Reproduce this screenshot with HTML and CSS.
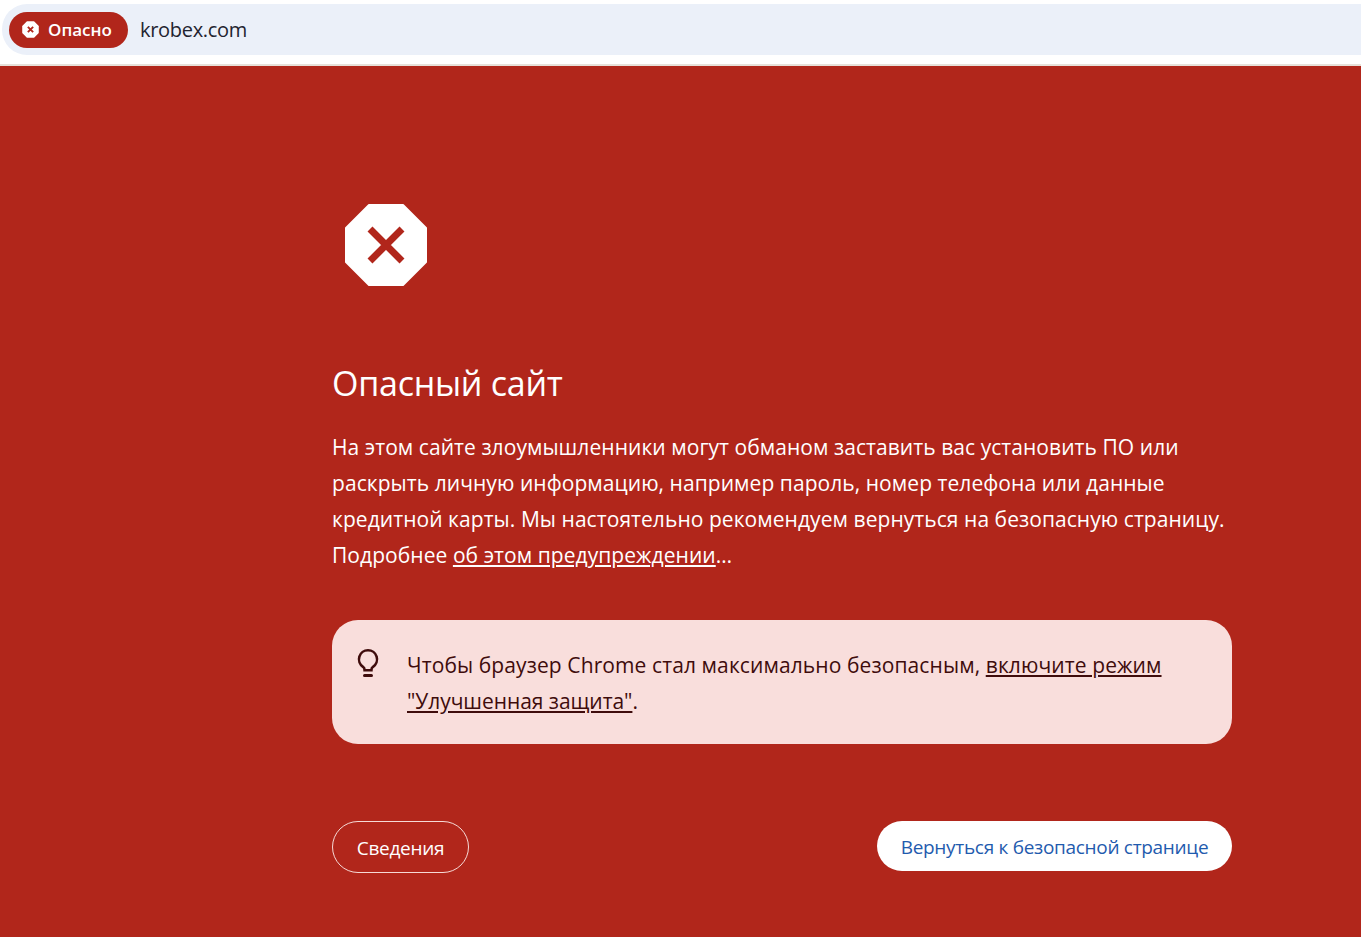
FILE: index.html
```html
<!DOCTYPE html>
<html lang="ru">
<head>
<meta charset="utf-8">
<title>Опасный сайт</title>
<link rel="stylesheet" href="styles.css">
</head>
<body>
<header class="toolbar">
  <div class="omnibox">
    <div class="chip">
      <svg class="chip-icon" viewBox="0 0 18 18" aria-hidden="true">
        <polygon points="5.5,1 12.5,1 17,5.5 17,12.5 12.5,17 5.5,17 1,12.5 1,5.5" fill="#fff" stroke="#fff" stroke-linejoin="round" stroke-width="1.5"/>
        <path d="M6.2 6.2 11.8 11.8M11.8 6.2 6.2 11.8" stroke="#b1261b" stroke-width="2" fill="none"/>
      </svg>
      <span class="chip-label">Опасно</span>
    </div>
    <span class="url">krobex.com</span>
  </div>
</header>
<main class="page">
  <div class="content">
    <svg class="stop-icon" viewBox="0 0 82 82" aria-hidden="true">
      <polygon points="24,1 58,1 81,24 81,58 58,81 24,81 1,58 1,24" fill="#fff" stroke="#fff" stroke-width="2" stroke-linejoin="round"/>
      <path d="M25 25 57 57M57 25 25 57" stroke="#b1261b" stroke-width="7" fill="none"/>
    </svg>
    <h1 class="title">Опасный сайт</h1>
    <p class="message">На этом сайте злоумышленники могут обманом заставить вас установить ПО или раскрыть личную информацию, например пароль, номер телефона или данные кредитной карты. Мы настоятельно рекомендуем вернуться на безопасную страницу. Подробнее <a class="link" href="#">об этом предупреждении</a>…</p>
    <div class="tip">
      <svg class="tip-icon" viewBox="0 0 24 32" aria-hidden="true">
        <path d="M12 3.300a9 9 0 0 0-5 16.500c1 .7 1.600 1.800 1.600 3.400h6.800c0-1.600.6-2.700 1.600-3.400A9 9 0 0 0 12 3.300Z" fill="none" stroke="#3f0c0c" stroke-width="2.600"/>
        <path d="M8.500 28.500h7" stroke="#3f0c0c" stroke-width="3" stroke-linecap="round"/>
      </svg>
      <p class="tip-text">Чтобы браузер Chrome стал максимально безопасным, <a class="tip-link" href="#">включите режим <span class="tip-link-name">"Улучшенная защита"</span></a>.</p>
    </div>
    <div class="actions">
      <button class="btn-details" type="button">Сведения</button>
      <button class="btn-back" type="button">Вернуться к безопасной странице</button>
    </div>
  </div>
</main>
</body>
</html>
```

FILE: styles.css
```css
* { box-sizing: border-box; }
html, body { margin: 0; height: 100%; }
body {
  font-family: "Open Sans", "Noto Sans", sans-serif;
  background: #b1261b;
  overflow: hidden;
  display: flex;
  flex-direction: column;
}
.toolbar {
  background: #fff;
  height: 66px;
  padding: 4px 0 0 2px;
  border-bottom: 2px solid #e6e1da;
  flex: none;
}
.omnibox {
  height: 51px;
  background: #ebf0f9;
  border-radius: 25px 0 0 25px;
  display: flex;
  align-items: center;
  padding-left: 7px;
}
.chip {
  width: 119px;
  height: 36px;
  border-radius: 18px;
  background: #b1261b;
  display: flex;
  align-items: center;
  padding-left: 13px;
  color: #fff;
}
.chip-icon { width: 17px; height: 17px; flex: none; }
.chip-label { margin-left: 9px; font-size: 17px; font-weight: 600; letter-spacing: 0; }
.url { margin-left: 12px; font-size: 20px; color: #1f2430; letter-spacing: -0.3px; }
.page { flex: 1; min-height: 0; }
.content { width: 900px; margin-left: 332px; padding-top: 138px; color: #fff; }
.stop-icon { display: block; width: 82px; height: 82px; margin-left: 13px; }
.title { margin: 75px 0 0; font-size: 34px; line-height: 44px; font-weight: 400; letter-spacing: -0.25px; }
.message { margin: 24px 0 0; font-size: 21px; line-height: 36px; letter-spacing: 0.06px; }
.link { color: #fff; text-decoration: underline; }
.tip {
  margin-top: 47px;
  height: 124px;
  border-radius: 26px;
  background: #f9dedc;
  display: flex;
  padding: 27px 0 0 23px;
  color: #3f0c0c;
}
.tip-icon { width: 26px; height: 32px; flex: none; }
.tip-text { margin: 0 0 0 26px; width: 790px; font-size: 21px; line-height: 36px; letter-spacing: 0.1px; }
.tip-link { color: #3f0c0c; text-decoration: underline; }
.tip-link-name { letter-spacing: -0.05px; }
.actions { margin-top: 77px; display: flex; justify-content: space-between; align-items: flex-start; }
button { font-family: inherit; cursor: pointer; }
.btn-details {
  width: 137px; height: 52px; border-radius: 26px;
  border: 1px solid #f6d9d6; background: transparent; color: #fff;
  font-size: 19px; letter-spacing: -0.3px; padding: 2px 0 0;
}
.btn-back {
  width: 355px; height: 50px; border-radius: 25px; border: 0;
  background: #fff; color: #1f5bae;
  font-size: 19px; letter-spacing: -0.3px; padding: 2px 0 0;
}
```
